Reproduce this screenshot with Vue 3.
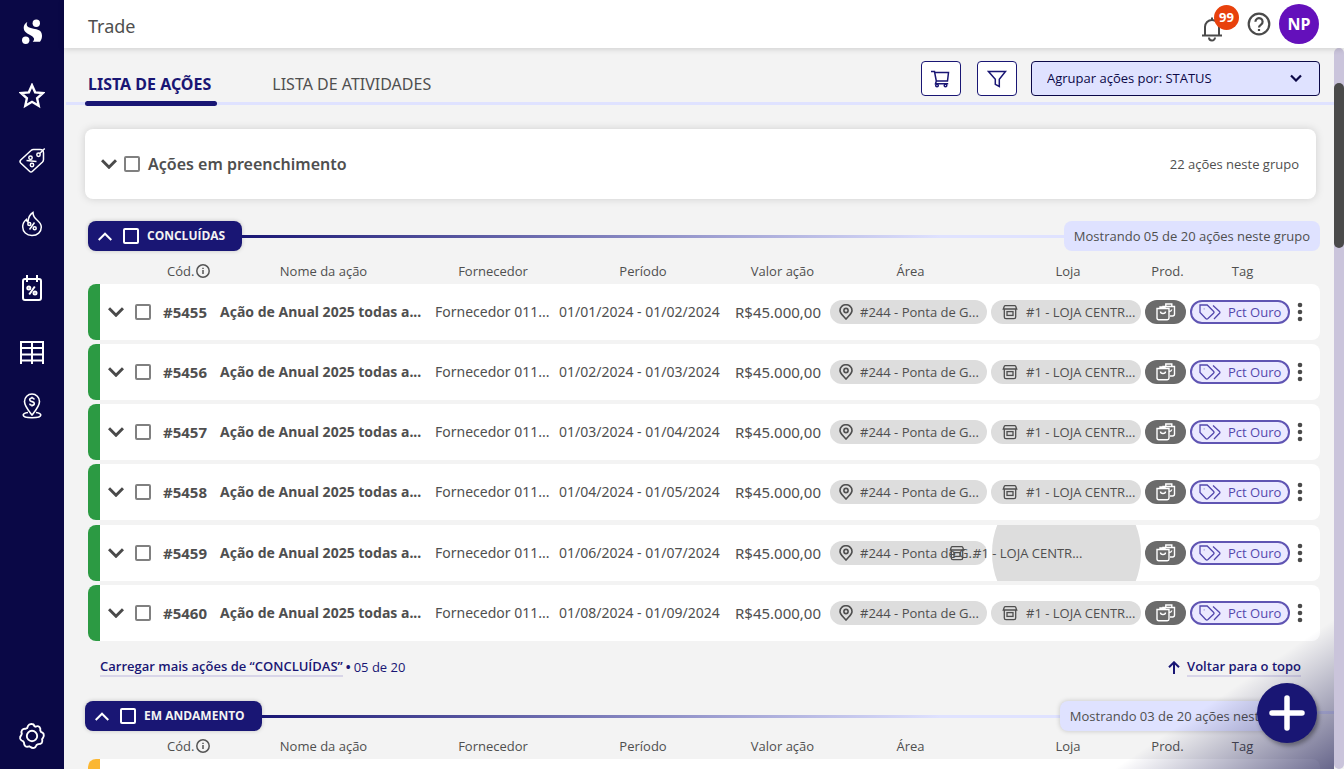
<script setup>
import { ref } from 'vue'

const columns = ['Nome da ação', 'Fornecedor', 'Período', 'Valor ação', 'Área', 'Loja', 'Prod.', 'Tag']

const done = [
  { code: '#5455', period: '01/01/2024 - 01/02/2024' },
  { code: '#5456', period: '01/02/2024 - 01/03/2024' },
  { code: '#5457', period: '01/03/2024 - 01/04/2024' },
  { code: '#5458', period: '01/04/2024 - 01/05/2024' },
  { code: '#5459', period: '01/06/2024 - 01/07/2024', expanded: true },
  { code: '#5460', period: '01/08/2024 - 01/09/2024' }
]
const running = [{ code: '', placeholder: true }]

const groups = [
  { id: 'done', title: 'CONCLUÍDAS', shown: 'Mostrando 05 de 20 ações neste grupo', rows: done, more: true },
  { id: 'running', title: 'EM ANDAMENTO', shown: 'Mostrando 03 de 20 ações neste grupo', rows: running, more: false }
]

const grouping = ref('status')
</script>

<template>
  <div class="app">
    <aside class="sidebar">
      <a href="#" class="logo" aria-label="Início">
        <svg width="24" height="26" viewBox="0 0 24 26" fill="#fff">
          <circle cx="16.300" cy="4.300" r="3.700" />
          <circle cx="5.700" cy="21.200" r="3.700" />
          <path d="M7.300 3C4 4.500 2.500 9 5 12.500c2.500 3 8 4 9 7 .2 1.500-.5 2.500-1.300 3.200H20c3-3.200 2.700-9.700-1-11.400-3-1.500-8-1.600-10.400-3C6.500 7 6.300 5 7.300 3z" />
        </svg>
      </a>
      <nav class="menu">
        <a href="#" aria-label="Favoritos">
          <svg width="26" height="26" viewBox="0 0 24 24" stroke-width="2.200"><path d="M12 2l2.900 6.600 7.100.7-5.300 4.800 1.500 7L12 17.400 5.800 21.100l1.500-7L2 9.300l7.100-.7z" /></svg>
        </a>
        <a href="#" aria-label="Ofertas">
          <svg width="28" height="28" viewBox="0 0 28 28" stroke-width="1.500">
            <path d="M15.500 3.500h6.500q3.500 0 3.500 3.500v6.500q0 1.500-1 2.500L14.500 25.300q-1.500 1.500-3 0L2.700 17q-1.400-1.500 0-3L13 4.500q1-1 2.500-1z" />
            <circle cx="20.500" cy="8.700" r="1.700" /><path d="M21.700 7.500l5-5M8.500 14.500l10 1" /><circle cx="12.500" cy="11.700" r="1.700" /><circle cx="14" cy="19" r="1.700" />
          </svg>
        </a>
        <a href="#" aria-label="Destaques">
          <svg width="26" height="28" viewBox="0 0 26 28" stroke-width="1.500">
            <path d="M13 25.500c-5.500 0-9.300-3.600-9.300-8.700 0-3.200 1.600-5.600 3.600-7.300.3 1.400.8 2 1.700 2.500C9.200 7.700 10.700 4.500 14 2.500c0 3.500 1.600 5.500 4 7.500 2.500 2.100 4.300 4 4.300 7 0 4.900-3.800 8.500-9.300 8.500z" />
            <path d="M15.500 12.500l-5 7" /><circle cx="10.300" cy="14" r="1.500" /><circle cx="15.700" cy="18.300" r="1.500" />
          </svg>
        </a>
        <a href="#" aria-label="Calendário">
          <svg width="26" height="28" viewBox="0 0 26 28" stroke-width="2">
            <rect x="4" y="5" width="18" height="21" rx="2" /><path d="M8 1v7M18 1v7M15.800 12.500l-5.600 8" /><circle cx="9.800" cy="14" r="1.500" /><circle cx="16" cy="19" r="1.500" />
          </svg>
        </a>
        <a href="#" aria-label="Tabelas">
          <svg width="26" height="24" viewBox="0 0 26 24" stroke-width="2"><path d="M2 24V2h22v22M13 2v22M2 8h22M2 14.500h22M2 20.500h22" /></svg>
        </a>
        <a href="#" aria-label="Lojas">
          <svg width="24" height="28" viewBox="0 0 24 28" stroke-width="1.600">
            <path d="M12 23C8 18 4.500 14 4.500 9.500a7.500 7.500 0 0 1 15 0C19.500 14 16 18 12 23zM8 20.500c-3 .4-4.800 1.200-4.800 2.500 0 1.700 4 2.700 8.800 2.700s8.800-1 8.800-2.700c0-1.300-1.800-2.100-4.800-2.500" />
            <path d="M14.300 7.400c-.3-1-1.200-1.400-2.300-1.400s-2.300.5-2.300 1.700c0 2.700 4.600 1.200 4.600 3.700 0 1.200-1.100 1.800-2.300 1.800s-2.200-.5-2.400-1.600M12 4.700V6M12 13.200v1.400" />
          </svg>
        </a>
      </nav>
      <a href="#" class="settings" aria-label="Configurações">
        <svg width="28" height="28" viewBox="0 0 28 28" stroke-width="1.900">
          <path d="M14 2q1.900 0 2.500 2.200l1.200.5q2-1.200 3.700.2 1.300 1.300.9 3.500l.6 1.400q2.100.7 2.700 2.100.7 2.300-.6 3.900l-.9 1.400q.7 2.300-.3 3.600-1.300 1.400-3.600 1.300l-1.600.9q-.9 2.400-2.500 2.900-2 .5-3.500-.9l-1.400-.7q-2.300.9-3.800-.1-1.500-1.200-1.400-3.400l-.8-1.500Q2.800 18.400 2.200 16.700q-.5-2.100 1-3.500l.6-1.500q-.8-2.300.3-3.700 1.200-1.500 3.500-1.200l1.500-.7Q10 3.300 11.300 2.500q1.300-.6 2.700-.5z" />
          <circle cx="14" cy="14" r="5.200" />
        </svg>
      </a>
    </aside>

    <div class="page">
      <header class="topbar">
        <h1>Trade</h1>
        <div class="account">
          <button class="bell" aria-label="Notificações">
            <svg width="22" height="26" viewBox="0 0 22 26" fill="none" stroke="#4a4a4a" stroke-width="2"><path d="M1 19.500h20M4 19.500V11a7 7 0 0 1 14 0v8.500M11 1.500V4M8 21.500a3 3 0 0 0 6 0" /></svg>
            <span class="count">99</span>
          </button>
          <button class="help" aria-label="Ajuda">
            <svg width="24" height="24" viewBox="0 0 24 24" fill="none" stroke="#4a4a4a" stroke-width="2.200"><circle cx="12" cy="12" r="10.300" /><path d="M8.400 9.700a3.600 3.600 0 1 1 5.600 3c-1.200.9-2 1.200-2 2.800M12 17v2" /></svg>
          </button>
          <button class="avatar">NP</button>
        </div>
      </header>

      <div class="body">
        <main class="content">
          <div class="toolbar">
            <nav class="tabs">
              <button class="tab active">LISTA DE AÇÕES</button>
              <button class="tab">LISTA DE ATIVIDADES</button>
            </nav>
            <div class="tools">
              <button class="tool" aria-label="Carrinho">
                <svg width="20" height="20" viewBox="0 0 20 20" fill="none" stroke="#191674" stroke-width="1.500"><path d="M0 2.500h3.500l1.800 9.500M3.800 3.500h13.700l-1 8.500H5.300l-.8 2.700h12.700" /><circle cx="6" cy="16.500" r="1.300" /><circle cx="14.500" cy="16.500" r="1.300" /></svg>
              </button>
              <button class="tool" aria-label="Filtrar">
                <svg width="20" height="20" viewBox="0 0 20 20" fill="none" stroke="#191674" stroke-width="1.500"><path d="M1.500 2.500h17l-6.200 7.800v7.200l-4-2.200v-5z" /></svg>
              </button>
              <div class="grouping">
                <select v-model="grouping" aria-label="Agrupar ações">
                  <option value="status">Agrupar ações por: STATUS</option>
                  <option value="store">Agrupar ações por: LOJA</option>
                </select>
                <svg width="12" height="8" viewBox="0 0 12 8" fill="none" stroke="#0b0847" stroke-width="2.200"><path d="M1 1.500l5 5 5-5" /></svg>
              </div>
            </div>
          </div>

          <section class="draft">
            <button class="toggle" aria-label="Expandir"><svg width="16" height="10" viewBox="0 0 16 10"><path d="M1 1.200l7 7 7-7" /></svg></button>
            <label><input type="checkbox" />Ações em preenchimento</label>
            <span class="total">22 ações neste grupo</span>
          </section>

          <section v-for="group in groups" :key="group.id" class="group" :class="group.id">
            <div class="group-head">
              <div class="pill">
                <button aria-label="Recolher"><svg width="14" height="9" viewBox="0 0 14 9" fill="none" stroke="#fff" stroke-width="2"><path d="M.7 8l6.300-6.300L13.300 8" /></svg></button>
                <label><input type="checkbox" />{{ group.title }}</label>
              </div>
              <span class="rule"></span>
              <span class="shown">{{ group.shown }}</span>
            </div>

            <table>
              <thead>
                <tr>
                  <th class="col-code" scope="col">
                    Cód.
                    <svg width="14" height="14" viewBox="0 0 14 14" fill="none" stroke="#555" stroke-width="1.500"><circle cx="7" cy="7" r="6.200" /><path d="M7 6v4M7 3.800v1.300" /></svg>
                  </th>
                  <th v-for="c in columns" :key="c" scope="col">{{ c }}</th>
                </tr>
              </thead>
              <tbody>
                <tr v-for="row in group.rows" :key="row.code" :class="{ expanded: row.expanded }">
                  <td class="status"></td>
                  <template v-if="!row.placeholder">
                    <td><button class="toggle" aria-label="Expandir"><svg width="16" height="10" viewBox="0 0 16 10"><path d="M1 1.200l7 7 7-7" /></svg></button></td>
                    <td><input type="checkbox" :aria-label="'Selecionar ' + row.code" /></td>
                    <td class="strong figure">{{ row.code }}</td>
                    <td class="strong">Ação de Anual 2025 todas a...</td>
                    <td>Fornecedor 011...</td>
                    <td>{{ row.period }}</td>
                    <td class="figure">R$45.000,00</td>
                    <td>
                      <span class="chip area">
                        <svg width="14" height="16" viewBox="0 0 14 16"><path d="M7 15C4 11.500 1 9.500 1 6.400a6 5.700 0 0 1 12 0C13 9.500 10 11.500 7 15z" /><circle cx="7" cy="6.500" r="2.100" /></svg>
                        #244 - Ponta de G...
                      </span>
                    </td>
                    <td class="store-cell">
                      <span v-if="row.expanded" class="store-shape"></span>
                      <span class="chip store" :class="{ loose: row.expanded }">
                        <svg width="16" height="16" viewBox="0 0 16 16"><path d="M3.300 1.600h9.400q.7 0 1 .7l1 2.700H1.300l1-2.700q.3-.7 1-.7zM2.300 5v8q0 1.700 1.700 1.700h8q1.700 0 1.700-1.700V5" /><rect x="5" y="7.600" width="6" height="3.800" /></svg>
                        #1 - LOJA CENTR...
                      </span>
                    </td>
                    <td>
                      <button class="products" aria-label="Produtos">
                        <svg width="20" height="18" viewBox="0 0 20 18" fill="none" stroke="#fff" stroke-width="1.400"><path d="M7 5V3.500h11.500V11q0 2-2 2H14M9.800 3.500V1h6v2.500M4 5.500V4h5v1.500M1 5.500h12V15q0 1.700-1.700 1.700H2.700Q1 16.700 1 15zM4.500 8.500q0 2 2.500 2t2.500-2M13.500 8.500q2-.2 2.300-2" /></svg>
                      </button>
                    </td>
                    <td>
                      <span class="chip tag">
                        <svg width="22" height="16" viewBox="0 0 22 16"><path d="M1 1h7.200l6.300 6.200q1 1 0 2L9 14.500q-1.200 1-2.300 0L1 8.500zM14 1.500l6.500 6q.8.900 0 1.800L15 15M4.800 4.800h.6" /></svg>
                        Pct Ouro
                      </span>
                    </td>
                    <td>
                      <button class="more" aria-label="Mais opções"><svg width="6" height="20" viewBox="0 0 6 20" fill="#4a4a4a"><circle cx="3" cy="3" r="2.300" /><circle cx="3" cy="10" r="2.300" /><circle cx="3" cy="17" r="2.300" /></svg></button>
                    </td>
                  </template>
                </tr>
              </tbody>
            </table>

            <div v-if="group.more" class="group-foot">
              <p><a href="#">Carregar mais ações de “CONCLUÍDAS”</a> <b>•</b> 05 de 20</p>
              <p class="top">
                <svg width="12" height="13" viewBox="0 0 12 13" fill="none" stroke="#191674" stroke-width="2"><path d="M6 13V1.500M1 6.300l5-5 5 5" /></svg>
                <a href="#">Voltar para o topo</a>
              </p>
            </div>
          </section>
        </main>
        <div class="scrollbar"><span></span></div>
        <div class="dock-line"></div>
        <div class="shade"></div>
        <button class="add" aria-label="Nova ação">
          <svg width="36" height="36" viewBox="0 0 36 36" stroke="#fff" stroke-width="5.500" stroke-linecap="round"><path d="M18 3v30M3 18h30" /></svg>
        </button>
      </div>
    </div>
  </div>
</template>

<style>
body { background: #f3f3f3; }
</style>

<style scoped>
* { box-sizing: border-box; }
.app {
  display: flex;
  height: 100vh;
  overflow: hidden;
  font-family: "Noto Sans", "Open Sans", sans-serif;
  font-size: 14px;
  line-height: 20px;
  color: #4f4f4f;
}
button { font: inherit; color: inherit; background: none; border: 0; padding: 0; cursor: pointer; }
svg { display: block; flex: none; }

.sidebar { flex: 0 0 64px; display: flex; flex-direction: column; align-items: center; background: #0a0846; padding: 19px 0 17px; }
.menu { display: flex; flex-direction: column; gap: 32px; margin-top: 35px; flex: 1; }
.menu a, .settings { display: grid; place-items: center; width: 32px; height: 32px; }
.menu a:last-child { margin-top: -10px; }
.menu svg, .settings svg { fill: none; stroke: #fff; }

.page { flex: 1; min-width: 0; display: flex; flex-direction: column; }
.topbar { flex: 0 0 48px; display: flex; align-items: center; justify-content: space-between; padding: 0 25px 0 24px; background: #fff; box-shadow: 0 1px 6px rgba(0, 0, 0, .16); position: relative; z-index: 2; }
h1 { margin: 4px 0 0; font-size: 18px; line-height: 24px; font-weight: 400; }
.account { display: flex; align-items: center; }
.bell { position: relative; padding-top: 9px; margin-right: 24px; }
.count { position: absolute; left: 13px; top: -2px; width: 25px; height: 25px; border-radius: 50%; background: #e8410c; color: #fff; font-size: 13px; line-height: 25px; font-weight: 700; }
.help { margin-right: 8px; }
.avatar { width: 40px; height: 40px; border-radius: 50%; background: #6410bb; color: #fff; font-size: 16px; font-weight: 700; }

.body { position: relative; flex: 1; min-height: 0; display: flex; }
.content { flex: 1; min-width: 0; overflow: hidden; }
.scrollbar { flex: 0 0 10px; background: #cac4db; border-radius: 5px; padding-top: 35px; }
.scrollbar span { display: block; height: 165px; border-radius: 5px; background: #4a4a4a; }

.toolbar { display: flex; justify-content: space-between; align-items: flex-end; height: 57px; margin-left: 2px; padding-right: 14px; border-bottom: 3px solid #dfe2ff; }
.tabs { display: flex; gap: 52px; padding-left: 19px; }
.tab { position: relative; height: 36px; padding: 0 6px 0 3px; font-size: 16px; }
.tab.active { color: #191674; font-weight: 700; }
.tab.active::after { content: ""; position: absolute; left: 0; right: 0; bottom: -4px; height: 5px; border-radius: 3px; background: #191674; }
.tools { display: flex; padding-bottom: 6px; }
.tool { display: grid; place-items: center; width: 40px; height: 35px; margin-right: 16px; border: 1px solid #191674; border-radius: 4px; background: #fff; }
.tool + .grouping { margin-left: -2px; }
.grouping { position: relative; width: 289px; }
.grouping select { appearance: none; width: 100%; height: 35px; padding: 0 36px 2px 15px; border: 1px solid #0b0847; border-radius: 4px; background: #dfe2ff; color: #0b0847; }
.grouping svg { position: absolute; right: 18px; top: 13px; pointer-events: none; }

.grouping select, .total, .group-head, th, .chip, .group-foot { font-family: "Open Sans", "Noto Sans", sans-serif; font-size: 13px; }

input[type="checkbox"] { appearance: none; display: block; flex: none; width: 16px; height: 16px; margin: 0; border: 2px solid #808080; border-radius: 2px; }
.toggle svg { fill: none; stroke: #4a4a4a; stroke-width: 3; }

.draft { display: flex; align-items: center; height: 70px; margin: 24px 18px 22px 21px; padding: 0 17px 0 16px; border-radius: 8px; background: #fff; box-shadow: 0 0 8px rgba(0, 0, 0, .15); }
.draft label { display: flex; align-items: center; gap: 8px; margin-left: 7px; font-size: 16px; font-weight: 600; }
.total { margin-left: auto; }

.group { margin: 0 14px 0 24px; }
.group-head { display: flex; align-items: center; height: 30px; }
.pill { display: flex; align-items: center; height: 30px; padding: 0 17px 0 10px; border-radius: 8px; background: #191674; color: #f3f3f3; box-shadow: 0 0 4px rgba(0, 0, 0, .2); font-size: 12px; font-weight: 700; }
.pill label { display: flex; align-items: center; gap: 8px; margin-left: 11px; }
.pill input[type="checkbox"] { border-color: #fff; }
.rule { flex: 1; height: 3px; background: linear-gradient(to right, #191674, #dfe2ff 85%); }
.shown { padding: 5px 10px; border-radius: 8px; background: #dfe2ff; }
.running .group-head { margin: 0 4px 0 -3px; }
.running .shown { box-shadow: 0 0 5px rgba(0, 0, 0, .2); }

table, thead, tbody { display: block; }
tr {
  display: grid;
  grid-template-columns: 12px 35px 28px 57fr 215fr 124fr 176fr 95fr 161fr 154fr 45fr 105fr 25fr;
  align-items: center;
}
th, td { padding: 0; white-space: nowrap; }
thead tr { height: 33px; padding-top: 7px; }
.running thead tr { height: 28px; padding-top: 2px; }
th { font-weight: 400; text-align: center; padding-right: 8px; }
th:nth-child(n + 5) { padding-right: 0; }
th.col-code { grid-column: 4; display: flex; align-items: center; gap: 2px; padding: 0 0 0 4px; }
tbody tr { height: 56px; overflow: hidden; border-radius: 8px; background: #fff; position: relative; }
tbody tr + tr { margin-top: 4px; }
tbody tr.expanded { margin-top: 5px; }
td.status { align-self: stretch; background: #2c9a43; }
.running td.status { background: #fbb733; }
td.status + td { padding-left: 8px; }
td.strong { font-weight: 700; }
td.figure { font-size: 15px; }
.chip { display: flex; align-items: center; height: 24px; margin-right: 4px; border-radius: 12px; background: #ddd; }
.chip svg { fill: none; stroke: #4f4f4f; stroke-width: 1.300; }
.chip.area { gap: 7px; padding-left: 9px; font-weight: 500; }
.chip.area svg { stroke-width: 1.600; }
.store { gap: 8px; padding-left: 11px; }
.store-cell { position: relative; }
.store-shape { position: absolute; left: 1px; right: 4px; top: -63px; height: 150px; border-radius: 75px; background: #ddd; }
.chip.loose { position: relative; margin-left: -53px; background: none; }
.products { display: grid; place-items: center; width: 41px; height: 24px; border-radius: 12px; background: #6b6b6b; }
.chip.tag { gap: 7px; margin-right: 5px; padding-left: 7px; border: 2px solid #6055b3; background: #ebe9ff; color: #5347ad; }
.chip.tag svg { stroke: #5347ad; }
.more { display: block; margin-left: 2px; }

.group-foot { display: flex; justify-content: space-between; padding: 16px 19px 24px 12px; color: #191674; }
.group-foot p { display: flex; gap: 3px; margin: 0; }
.group-foot .top { align-items: center; gap: 7px; }
.group-foot a { color: inherit; font-weight: 600; text-decoration: none; border-bottom: 2px solid #d8d5e8; line-height: 18px; }

.dock-line { position: absolute; right: 10px; bottom: 55px; width: 40px; height: 3px; background: #dfe2ff; }
.shade { position: absolute; right: 10px; bottom: 0; width: 220px; height: 150px; background: linear-gradient(to bottom right, transparent 50%, rgba(10, 8, 70, .6)); pointer-events: none; }
.add { position: absolute; right: 27px; bottom: 26px; width: 60px; height: 60px; display: grid; place-items: center; border-radius: 50%; background: #191674; box-shadow: 2px 3px 4px rgba(0, 0, 0, .35); }
</style>
